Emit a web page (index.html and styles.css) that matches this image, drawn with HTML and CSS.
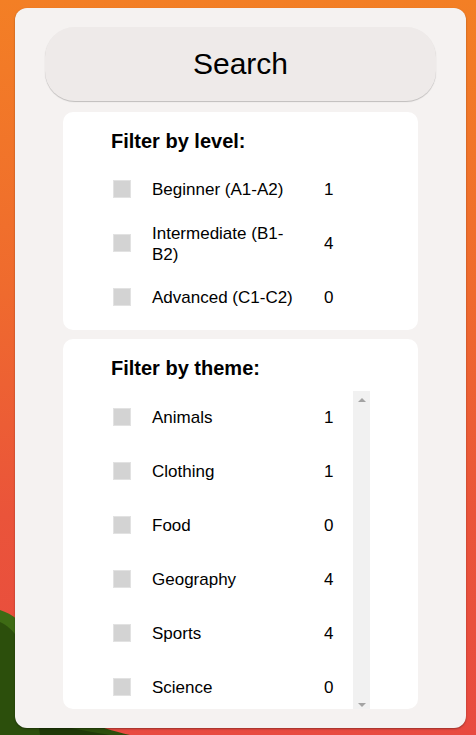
FILE: index.html
```html
<!DOCTYPE html>
<html lang="en">
<head>
<meta charset="utf-8">
<title>Filters</title>
<link rel="stylesheet" href="styles.css">
</head>
<body>
<div class="leaves">
  <svg width="170" height="125" viewBox="0 0 170 125">
    <path d="M0 0 C 12 4 24 12 34 30 L 40 125 L 0 125 Z" fill="#3e6b14"/>
    <path d="M0 12 C 14 18 24 34 32 60 C 40 88 60 108 130 125 L 0 125 Z" fill="#2c4f0c"/>
    <path d="M38 110 C 60 116 80 120 110 125 L 40 125 Z" fill="#1f3a08"/>
  </svg>
</div>
<main class="panel">
  <button class="search-btn" type="button">Search</button>

  <section class="card card-level">
    <h3 class="card-title">Filter by level:</h3>
    <ul class="opts level-list">
      <li class="opt"><span class="box"></span><span class="label">Beginner (A1-A2)</span><span class="count">1</span></li>
      <li class="opt"><span class="box"></span><span class="label">Intermediate (B1-B2)</span><span class="count">4</span></li>
      <li class="opt"><span class="box"></span><span class="label">Advanced (C1-C2)</span><span class="count">0</span></li>
    </ul>
  </section>

  <section class="card card-theme">
    <h3 class="card-title">Filter by theme:</h3>
    <div class="scroller">
      <ul class="opts list">
        <li class="opt"><span class="box"></span><span class="label">Animals</span><span class="count">1</span></li>
        <li class="opt"><span class="box"></span><span class="label">Clothing</span><span class="count">1</span></li>
        <li class="opt"><span class="box"></span><span class="label">Food</span><span class="count">0</span></li>
        <li class="opt"><span class="box"></span><span class="label">Geography</span><span class="count">4</span></li>
        <li class="opt"><span class="box"></span><span class="label">Sports</span><span class="count">4</span></li>
        <li class="opt"><span class="box"></span><span class="label">Science</span><span class="count">0</span></li>
      </ul>
      <div class="scrollbar">
        <span class="arrow-up"></span>
        <span class="arrow-down"></span>
      </div>
    </div>
  </section>
</main>
</body>
</html>
```

FILE: styles.css
```css
* { box-sizing: border-box; }

html, body {
  margin: 0;
  padding: 0;
  height: 735px;
  overflow: hidden;
}

body {
  position: relative;
  font-family: "Liberation Sans", Arial, sans-serif;
  color: #000;
  background: linear-gradient(180deg, #f37f25 0%, #ef6a2e 40%, #ea543a 70%, #e84a40 100%);
  padding-top: 8px;
}

.leaves {
  position: absolute;
  left: 0;
  bottom: 0;
  z-index: 0;
  line-height: 0;
}

.panel {
  position: relative;
  z-index: 1;
  margin-left: 15px;
  width: 451px;
  height: 720px;
  background: #f5f2f1;
  border-radius: 12px;
  box-shadow: 0 1px 2px rgba(0, 0, 0, 0.35);
  padding: 19px 30px 0;
  display: flex;
  flex-direction: column;
}

.search-btn {
  height: 74px;
  width: 100%;
  border: none;
  border-radius: 30px;
  background: #eeeae9;
  box-shadow: 0 1px 1px rgba(0, 0, 0, 0.22);
  font-family: "Liberation Sans", Arial, sans-serif;
  font-size: 30px;
  color: #000;
  padding: 0 0 1px;
  cursor: pointer;
}

.card {
  margin: 0 18px;
  background: #fff;
  border-radius: 10px;
  padding: 0 48px;
  overflow: hidden;
}

.card-level {
  margin-top: 11px;
  height: 218px;
  padding-top: 18px;
}

.card-theme {
  margin-top: 9px;
  height: 370px;
  padding-top: 18px;
}

.card-title {
  margin: 0;
  font-size: 20px;
  line-height: 23px;
  font-weight: bold;
}

.opts {
  list-style: none;
  margin: 10px 0 0;
  padding: 0;
}

.level-list {
  margin-top: 9px;
}

.opt {
  height: 54px;
  display: flex;
  align-items: center;
  font-size: 17px;
  line-height: 21px;
}

.box {
  flex: none;
  width: 18px;
  height: 18px;
  margin-left: 2px;
  margin-right: 21px;
  background: #d3d3d3;
  border: 1px solid #e2e2e2;
}

.label {
  flex: none;
  width: 150px;
  padding-top: 1px;
}

.count {
  margin-left: 22px;
  padding-top: 1px;
}

.scroller {
  margin-top: 10px;
  height: 319px;
  display: flex;
}

.list {
  margin: 0;
  flex: 1;
  overflow: hidden;
}

.scrollbar {
  flex: none;
  width: 17px;
  margin-top: 1px;
  background: #f1f1f1;
  display: flex;
  flex-direction: column;
  justify-content: space-between;
  align-items: center;
  padding: 7px 0 2px;
}

.arrow-up {
  width: 0;
  height: 0;
  border-left: 4px solid transparent;
  border-right: 4px solid transparent;
  border-bottom: 4px solid #a3a3a3;
}

.arrow-down {
  width: 0;
  height: 0;
  border-left: 4px solid transparent;
  border-right: 4px solid transparent;
  border-top: 4px solid #a3a3a3;
}
```
